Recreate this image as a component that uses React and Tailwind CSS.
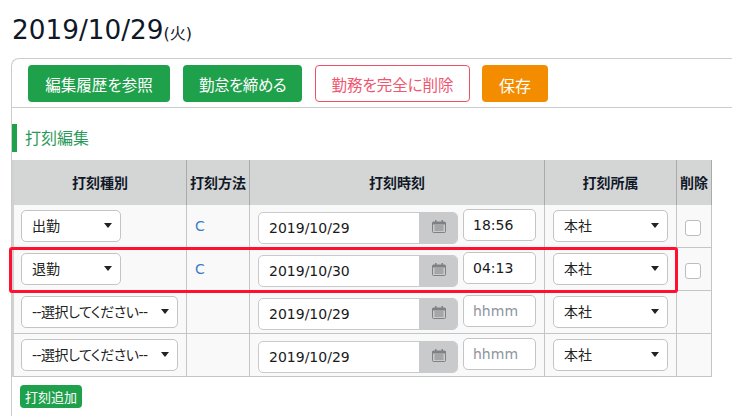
const font = { fontFamily: '"DejaVu Sans", "Noto Sans CJK JP", sans-serif' };
const jp = { fontFamily: '"Noto Sans CJK JP", sans-serif' };

function Caret() {
  return <span className="w-0 h-0 border-x-[4px] border-x-transparent border-t-[5px] border-t-[#222]" />;
}

function SelectBox({ label, wide, place }) {
  const width = place ? "w-[115px] ml-[8px]" : wide ? "w-[157px] ml-[7px]" : "w-[100px] ml-[7px]";
  return (
    <div className={`${width} h-[32px] -mt-[1px] flex items-center justify-between pl-[10px] pr-[8px] bg-white border border-[#c4c4c4] rounded-[5px] text-[14px] text-[#222]`}>
      <span className={`whitespace-nowrap pt-[1px] [font-feature-settings:'palt'] ${wide ? "tracking-[-0.5px]" : ""}`}>{label}</span>
      <Caret />
    </div>
  );
}

function CalendarIcon() {
  return (
    <svg width="14" height="13" viewBox="0 0 14 13" className="text-[#7f8284] -mt-[4px] ml-[2px]">
      <rect x="0.5" y="2" width="13" height="10.5" rx="1" fill="none" stroke="currentColor" />
      <rect x="0.5" y="2" width="13" height="2.5" fill="currentColor" />
      <rect x="3" y="0" width="1.5" height="3" fill="currentColor" />
      <rect x="9.5" y="0" width="1.5" height="3" fill="currentColor" />
      <path d="M2.5 6h9M2.5 8h9M2.5 10h9" stroke="currentColor" strokeWidth="1" />
    </svg>
  );
}

function DateBox({ value }) {
  return (
    <div className="w-[200px] h-[32px] ml-[8px] mt-[4px] flex rounded-[5px] overflow-hidden border border-[#c9cacb] bg-white">
      <div className="flex-1 pl-[10px] text-[14px] leading-[31px] text-[#1a1a1a]">{value}</div>
      <div className="w-[38px] bg-[#c9cacb] flex items-center justify-center">
        <CalendarIcon />
      </div>
    </div>
  );
}

function TimeBox({ value }) {
  return (
    <input
      readOnly
      value={value}
      placeholder="hhmm"
      className="w-[73px] h-[32px] mt-[1px] pl-[9px] bg-white border border-[#c4c4c4] rounded-[5px] text-[14px] text-[#1a1a1a] placeholder:text-[#8e959c] outline-none"
      style={font}
    />
  );
}

const rows = [
  { type: "出勤", method: "C", date: "2019/10/29", time: "18:56", del: true },
  { type: "退勤", method: "C", date: "2019/10/30", time: "04:13", del: true },
  { type: "--選択してください--", wide: true, method: "", date: "2019/10/29", time: "" },
  { type: "--選択してください--", wide: true, method: "", date: "2019/10/29", time: "" },
];

const th = "bg-[#d4d6d6] border-r border-[#a9abab] font-bold text-[14px] text-[#111827] text-center p-0";
const td = "bg-[#f9f9f9] border-r border-b border-[#c4c6c6] p-0 align-top";
const btn = "h-[37px] pt-[3px] rounded-[4px] [font-feature-settings:'palt']";

export default function App() {
  return (
    <div className="w-[732px] h-[416px] overflow-hidden bg-white" style={font}>
      <h1 className="h-[58px] pl-[12px] pt-[12px] text-[26.3px] leading-[36px] font-normal text-[#101828]">
        2019/10/29<span className="text-[16px]">(火)</span>
      </h1>
      <div className="ml-[11px] w-[760px] h-[358px] border-t border-l border-[#cccccc] rounded-tl-[8px]">
        <div className="h-[49px] pt-[6px] pl-[16px] flex gap-[13px] border-b border-[#cccccc] text-[15.5px]" style={jp}>
          <button className={`${btn} w-[142px] bg-[#1fa14c] text-white`}>編集履歴を参照</button>
          <button className={`${btn} w-[119px] bg-[#1fa14c] text-white tracking-[-0.5px]`}>勤怠を締める</button>
          <button className={`${btn} w-[155px] bg-white text-[#f0566f] border border-[#ee5068]`}>勤務を完全に削除</button>
          <button className={`${btn} w-[66px] -ml-[1px] bg-[#f48c00] text-white text-[16px]`}>保存</button>
        </div>
        <div className="mt-[16px] h-[28px] border-l-[5px] border-[#1fa14c] pl-[8px] text-[16px] leading-[26px] text-[#2b9a58]" style={jp}>
          打刻編集
        </div>
        <div className="relative mt-[8px]">
          <table className="w-[700px] table-fixed border-separate border-spacing-0 border-l-2 border-[#d0d2d2]">
            <colgroup>
              <col className="w-[173px]" />
              <col className="w-[63px]" />
              <col className="w-[295px]" />
              <col className="w-[132px]" />
              <col className="w-[35px]" />
            </colgroup>
            <thead>
              <tr className="h-[45px]" style={jp}>
                <th className={th}>打刻種別</th>
                <th className={th}>打刻方法</th>
                <th className={th}>打刻時刻</th>
                <th className={th}>打刻所属</th>
                <th className={th}>削除</th>
              </tr>
            </thead>
            <tbody>
              {rows.map((row, idx) => (
                <tr key={idx} className="h-[43px]">
                  <td className={td}>
                    <div className="h-[42px] flex items-center">
                      <SelectBox label={row.type} wide={row.wide} />
                    </div>
                  </td>
                  <td className={td}>
                    <div className="pl-[8px] pt-[11px] text-[14px] text-[#3b7cc9]">{row.method}</div>
                  </td>
                  <td className={td}>
                    <div className="flex gap-[5px] items-start pt-[3px]">
                      <DateBox value={row.date} />
                      <TimeBox value={row.time} />
                    </div>
                  </td>
                  <td className={td}>
                    <div className="h-[42px] flex items-center">
                      <SelectBox label="本社" place />
                    </div>
                  </td>
                  <td className={td}>
                    {row.del && <div className="w-[16px] h-[16px] ml-[8px] mt-[15px] bg-white border border-[#bdbdbd] rounded-[3px]" />}
                  </td>
                </tr>
              ))}
            </tbody>
          </table>
          {/* highlight laid over the 退勤 row */}
          <div className="absolute left-[-3px] top-[87px] w-[669px] h-[46px] border-[3px] border-[#ff1030] rounded-[3px] pointer-events-none" />
        </div>
        <button className="mt-[8px] ml-[8px] w-[62px] h-[23px] bg-[#1fa14c] text-white text-[13px] rounded-[4px]" style={jp}>
          打刻追加
        </button>
      </div>
    </div>
  );
}
